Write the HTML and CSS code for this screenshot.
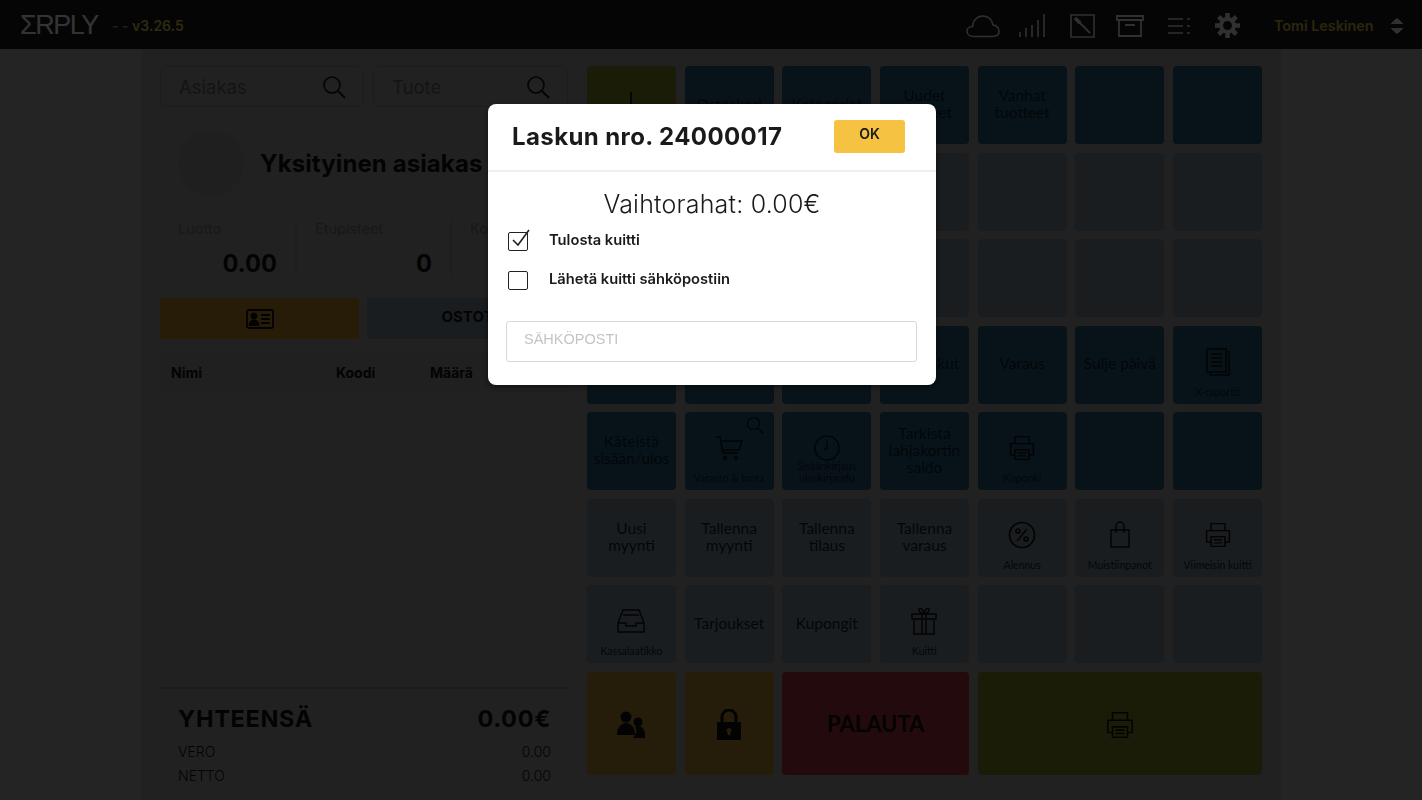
FILE: index.html
```html
<!DOCTYPE html>
<html lang="fi">
<head>
    <meta charset="UTF-8">
    <meta name="viewport" content="width=device-width, initial-scale=1.0">
    <title>Kassa</title>
    <link rel="stylesheet" href="styles.css">
</head>
<body>
    <svg class="defs" width="0" height="0">
        <symbol id="i-print" viewBox="0 0 32 32" fill="none" stroke="currentColor" stroke-width="1.7">
            <path d="M8 11V3h16v8M8 24H3V11h26v13h-5"/>
            <path d="M8 18h16v11H8zM11 21.500h10M11 25h10"/>
        </symbol>
        <symbol id="i-search" viewBox="0 0 24 24" fill="none" stroke="currentColor" stroke-width="1.6">
            <circle cx="10" cy="10" r="8"/>
            <path d="M16 16l7 7" stroke-width="2"/>
        </symbol>
    </svg>

    <header class="topbar">
        <div class="logo">ΣRPLY</div>
        <div class="version"><span class="version-dash">- -</span> v3.26.5</div>
        <div class="top-icons">
            <span class="top-icon">
                <svg width="34" height="24" viewBox="0 0 36 24" fill="none" stroke="currentColor" stroke-width="1.6"><path d="M8 23C3 23 1 20 1 17.500S3 12.500 7 12.500C7 6 12 1.500 18 1.500S28 6 28.500 11C32 11 35 14 35 17.500S32 23 28 23z"/></svg>
            </span>
            <span class="top-icon">
                <svg width="26" height="24" viewBox="0 0 26 24" fill="none" stroke="currentColor" stroke-width="1.6"><path d="M1 23v-5M7 23v-9M13 23V11M19 23V6M25 23V0"/></svg>
            </span>
            <span class="top-icon box-icon">
                <svg width="25" height="24" viewBox="0 0 25 24" fill="none" stroke="currentColor" stroke-width="1.6"><path d="M1 1h23v22H1z"/><path d="M5 4l5 5" stroke-width="3.500"/><path d="M9 8l11 11" stroke-width="1.800"/></svg>
            </span>
            <span class="top-icon">
                <svg width="28" height="22" viewBox="0 0 28 22" fill="none" stroke="currentColor" stroke-width="1.800"><path d="M1 1h26v4H1zM3 5v16h22V5M9 10h10"/></svg>
            </span>
            <span class="top-icon">
                <svg width="22" height="18" viewBox="0 0 22 18" fill="none" stroke="currentColor" stroke-width="1.500"><path d="M0 2h15M0 9h15M0 16h15M19 2h3M19 9h3M19 16h3"/></svg>
            </span>
            <span class="top-icon">
                <svg width="27" height="27" viewBox="0 0 27 27" fill="none" stroke="currentColor"><circle cx="13.500" cy="13.500" r="6.500" stroke-width="4"/><path d="M13.500 1v5M13.500 21v5M1 13.500h5M21 13.500h5M4.700 4.700l3.500 3.500M18.800 18.800l3.500 3.500M4.700 22.300l3.500-3.500M18.800 8.200l3.500-3.500" stroke-width="4.500"/></svg>
            </span>
        </div>
        <div class="user-name">Tomi Leskinen</div>
        <div class="user-arrows"></div>
    </header>

    <main class="wrap">
        <section class="left">
            <div class="search-row">
                <div class="search-box search-customer"><span>Asiakas</span><svg class="search-icon" width="24" height="24"><use href="#i-search"/></svg></div>
                <div class="search-box search-product"><span>Tuote</span><svg class="search-icon" width="24" height="24"><use href="#i-search"/></svg></div>
            </div>

            <div class="customer">
                <div class="avatar"></div>
                <div class="customer-name">Yksityinen asiakas</div>
            </div>

            <div class="stats">
                <div class="stat"><div class="stat-label">Luotto</div><div class="stat-value">0.00</div></div>
                <div class="stat"><div class="stat-label">Etupisteet</div><div class="stat-value">0</div></div>
                <div class="stat"><div class="stat-label">Kortti</div></div>
            </div>

            <div class="tab-row">
                <div class="tab tab-yellow">
                    <svg width="28" height="20" viewBox="0 0 28 20" fill="none" stroke="currentColor" stroke-width="1.800"><rect x="1" y="1" width="26" height="18" rx="2"/><circle cx="8" cy="7" r="2.500" fill="currentColor"/><path d="M3.500 16c0-6 9-6 9 0z" fill="currentColor"/><path d="M15 6h9M15 10h9M15 14h9"/></svg>
                </div>
                <div class="tab tab-blue">OSTOT</div>
            </div>

            <div class="table-head">
                <span class="col-name">Nimi</span>
                <span class="col-code">Koodi</span>
                <span>Määrä</span>
            </div>

            <div class="totals">
                <div class="total-main"><span>YHTEENSÄ</span><span>0.00€</span></div>
                <div class="total-sub"><span>VERO</span><span>0.00</span></div>
                <div class="total-sub"><span>NETTO</span><span>0.00</span></div>
            </div>
        </section>

        <section class="tiles">
            <div class="tile olive"><svg width="4" height="24"><path d="M2 0v24" stroke="currentColor" stroke-width="2"/></svg></div>
            <div class="tile blue">Ostoskori</div>
            <div class="tile blue">Kategoriat</div>
            <div class="tile blue">Uudet tuotteet</div>
            <div class="tile blue">Vanhat tuotteet</div>
            <div class="tile blue"></div>
            <div class="tile blue"></div>

            <div class="tile blue"></div>
            <div class="tile blue"></div>
            <div class="tile blue"></div>
            <div class="tile pale"></div>
            <div class="tile pale"></div>
            <div class="tile pale"></div>
            <div class="tile pale"></div>

            <div class="tile blue"></div>
            <div class="tile blue"></div>
            <div class="tile blue"></div>
            <div class="tile pale"></div>
            <div class="tile pale"></div>
            <div class="tile pale"></div>
            <div class="tile pale"></div>

            <div class="tile blue"></div>
            <div class="tile blue"></div>
            <div class="tile blue"></div>
            <div class="tile blue">Ota laskut</div>
            <div class="tile blue">Varaus</div>
            <div class="tile blue">Sulje päivä</div>
            <div class="tile blue icon-tile">
                <svg width="26" height="28" viewBox="0 0 26 28" fill="none" stroke="currentColor" stroke-width="1.500"><path d="M2 1h19v23H2zM21 4h3v23H5v-3M6 6h11M6 10h11M6 14h11M6 18h11"/></svg>
                <span class="tile-label">X-raportti</span>
            </div>

            <div class="tile blue">Käteistä sisään/ulos</div>
            <div class="tile blue icon-tile">
                <svg class="corner-search" width="18" height="18"><use href="#i-search"/></svg>
                <svg width="28" height="28" viewBox="0 0 28 28" fill="none" stroke="currentColor" stroke-width="1.600"><path d="M1 3h4l3 16h15M6 7h21l-3 9H8"/><circle cx="10" cy="24" r="1.500"/><circle cx="21" cy="24" r="1.500"/></svg>
                <span class="tile-label">Varasto &amp; hinta</span>
            </div>
            <div class="tile blue icon-tile">
                <svg width="28" height="28" viewBox="0 0 28 28" fill="none" stroke="currentColor" stroke-width="1.500"><circle cx="14" cy="14" r="12"/><path d="M14 7v8h-3"/></svg>
                <span class="tile-label tight">Sisäänkirjaus uloskirjaudu</span>
            </div>
            <div class="tile blue">Tarkista lahjakortin saldo</div>
            <div class="tile blue icon-tile">
                <svg width="28" height="28"><use href="#i-print"/></svg>
                <span class="tile-label">Kuponki</span>
            </div>
            <div class="tile blue"></div>
            <div class="tile blue"></div>

            <div class="tile pale">Uusi myynti</div>
            <div class="tile pale">Tallenna myynti</div>
            <div class="tile pale">Tallenna tilaus</div>
            <div class="tile pale">Tallenna varaus</div>
            <div class="tile pale icon-tile">
                <svg width="28" height="28" viewBox="0 0 28 28" fill="none" stroke="currentColor" stroke-width="1.700"><circle cx="14" cy="14" r="12.500"/><circle cx="10" cy="10" r="2"/><circle cx="18" cy="18" r="2"/><path d="M19 8L9 20"/></svg>
                <span class="tile-label">Alennus</span>
            </div>
            <div class="tile pale icon-tile">
                <svg width="28" height="28" viewBox="0 0 28 28" fill="none" stroke="currentColor" stroke-width="1.500"><path d="M5 9h18v17H5zM10 12V5a4 4 0 0 1 8 0v7"/></svg>
                <span class="tile-label">Muistiinpanot</span>
            </div>
            <div class="tile pale icon-tile">
                <svg width="28" height="28"><use href="#i-print"/></svg>
                <span class="tile-label">Viimeisin kuitti</span>
            </div>

            <div class="tile pale icon-tile">
                <svg width="28" height="28" viewBox="0 0 28 28" fill="none" stroke="currentColor" stroke-width="1.500"><path d="M6 3h16l5 13v9H1v-9zM1 16h8v3h10v-3h8M6 8h16"/></svg>
                <span class="tile-label">Kassalaatikko</span>
            </div>
            <div class="tile pale">Tarjoukset</div>
            <div class="tile pale">Kupongit</div>
            <div class="tile pale icon-tile">
                <svg width="28" height="28" viewBox="0 0 28 28" fill="none" stroke="currentColor" stroke-width="1.500"><path d="M2 7h24v5H2zM4 12h20v15H4zM12 7v20M16 7v20M14 7C10 6 8 4 9 2s5 1 5 5c0-4 4-7 5-5s-1 4-5 5z"/></svg>
                <span class="tile-label">Kuitti</span>
            </div>
            <div class="tile pale"></div>
            <div class="tile pale"></div>
            <div class="tile pale"></div>

            <div class="tile yellow low">
                <svg width="30" height="28" viewBox="0 0 30 28" fill="currentColor"><circle cx="10" cy="6" r="5.500"/><path d="M1 24c0-16 18-16 18 0z"/><circle cx="22" cy="11" r="4.500"/><path d="M17 27c4-5 4-9 2-11 5-3 11 1 10 11z"/></svg>
            </div>
            <div class="tile yellow low">
                <svg width="26" height="32" viewBox="0 0 26 32"><path fill="currentColor" fill-rule="evenodd" d="M1 13h24v18H1zM13 19a2.500 2.500 0 0 0-1.500 4.500V26h3v-2.500A2.500 2.500 0 0 0 13 19z"/><path d="M6 13V8a7 7 0 0 1 14 0v5" fill="none" stroke="currentColor" stroke-width="3"/></svg>
            </div>
            <div class="tile red wide-2">PALAUTA</div>
            <div class="tile olive wide-3 low">
                <svg width="30" height="30"><use href="#i-print"/></svg>
            </div>
        </section>
    </main>

    <div class="overlay">
        <div class="modal">
            <div class="modal-head">
                <h2>Laskun nro. 24000017</h2>
                <button class="ok-btn">OK</button>
            </div>
            <div class="modal-body">
                <div class="change">Vaihtorahat: 0.00€</div>
                <div class="check-row">
                    <span class="check-box">
                        <svg class="check-mark" width="22" height="22" viewBox="0 0 22 22" fill="none" stroke="#222" stroke-width="1.600"><path d="M4 12l5 5L20 2"/></svg>
                    </span>
                    <span class="check-label">Tulosta kuitti</span>
                </div>
                <div class="check-row">
                    <span class="check-box"></span>
                    <span class="check-label">Lähetä kuitti sähköpostiin</span>
                </div>
                <input class="email" type="text" placeholder="SÄHKÖPOSTI">
            </div>
        </div>
    </div>
</body>
</html>
```

FILE: styles.css
```css
* {
    box-sizing: border-box;
}
body {
    margin: 0;
    height: 800px;
    overflow: hidden;
    font-family: "Inter", "Liberation Sans", sans-serif;
    background-color: #b4b4b4;
    color: #111;
}
.defs {
    position: absolute;
}

/* top bar */
.topbar {
    height: 49px;
    background-color: #191919;
    display: flex;
    align-items: center;
    padding: 2px 18px 0 20px;
    color: #eee;
}
.logo {
    font-family: "Liberation Sans", sans-serif;
    font-size: 27px;
    font-weight: 400;
    letter-spacing: -1.5px;
    width: 92px;
    color: #fff;
}
.version {
    font-size: 14px;
    font-weight: 600;
    color: #e6cc55;
}
.version-dash {
    color: #999;
}
.top-icons {
    display: flex;
    margin-left: auto;
}
.top-icon {
    width: 49px;
    display: flex;
    justify-content: center;
    align-items: center;
}
.box-icon {
    padding-left: 3px;
}
.user-name {
    margin-left: 22px;
    font-size: 14.300px;
    font-weight: 600;
    color: #d8bc48;
    width: 116px;
    white-space: nowrap;
}
.user-arrows {
    width: 14px;
    height: 16px;
    background:
        linear-gradient(to bottom right, transparent 50%, #eee 51%) left 0 / 7px 6px no-repeat,
        linear-gradient(to bottom left, transparent 50%, #eee 51%) right 0 / 7px 6px no-repeat,
        linear-gradient(to top right, transparent 50%, #eee 51%) left 100% / 7px 6px no-repeat,
        linear-gradient(to top left, transparent 50%, #eee 51%) right 100% / 7px 6px no-repeat;
}

/* page */
.wrap {
    width: 1140px;
    height: 751px;
    margin: 0 auto;
    padding: 17px 18px 0 19px;
    background-color: #a5a5a5;
    display: flex;
    gap: 19px;
}
.left {
    width: 408px;
    height: 725px;
    display: flex;
    flex-direction: column;
}
.search-row {
    display: flex;
    gap: 9px;
}
.search-box {
    height: 41px;
    border: 1px solid #8e8e8e;
    border-radius: 6px;
    padding: 0 17px 0 18px;
    display: flex;
    align-items: center;
    justify-content: space-between;
    font-size: 18.500px;
    color: #666;
}
.search-customer {
    width: 204px;
}
.search-product {
    width: 195px;
}
.search-icon {
    color: #111;
}
.customer {
    display: flex;
    align-items: center;
    margin: 24px 0 0 18px;
    gap: 16px;
    height: 64px;
}
.avatar {
    width: 66px;
    height: 66px;
    border-radius: 50%;
    background-color: #9b9b9b;
}
.customer-name {
    font-size: 24px;
    font-weight: 700;
    letter-spacing: 0.1px;
    white-space: nowrap;
}
.stats {
    display: flex;
    margin-top: 25px;
    height: 56px;
}
.stat {
    width: 137px;
    height: 56px;
    margin-right: 18px;
    padding-right: 18px;
    border-right: 2px solid #959595;
    flex: none;
}
.stat:first-child {
    padding-left: 18px;
}
.stat:last-child {
    border-right: none;
}
.stat-label {
    font-size: 14.500px;
    line-height: 17px;
    color: #777;
}
.stat-value {
    font-size: 23.700px;
    line-height: 28px;
    font-weight: 700;
    text-align: right;
    margin-top: 13px;
}
.tab-row {
    display: flex;
    justify-content: space-between;
    margin-top: 22px;
}
.tab {
    height: 41px;
    display: flex;
    align-items: center;
    justify-content: center;
    font-size: 15px;
    font-weight: 700;
}
.tab-yellow {
    width: 199px;
    background-color: #c08c28;
}
.tab-blue {
    width: 201px;
    background-color: #7d91a0;
    padding-bottom: 5px;
}
.table-head {
    height: 40px;
    margin-top: 13px;
    padding-left: 11px;
    background-color: #9e9e9e;
    display: flex;
    align-items: center;
    font-size: 14px;
    font-weight: 700;
}
.col-name {
    width: 165px;
}
.col-code {
    width: 94px;
}
.totals {
    margin-top: auto;
    border-top: 2px solid #8c8c8c;
    padding: 15px 17px 3px 18px;
}
.total-main {
    display: flex;
    justify-content: space-between;
    font-size: 23.500px;
    line-height: 30px;
    letter-spacing: 0.7px;
    font-weight: 700;
    margin-bottom: 6px;
}
.total-sub {
    display: flex;
    justify-content: space-between;
    font-size: 14px;
    font-weight: 300;
    line-height: 24px;
}

/* tile grid */
.tiles {
    width: 675px;
    display: grid;
    grid-template-columns: repeat(7, 1fr);
    grid-template-rows: repeat(7, 78px) 103px;
    gap: 8.500px 8.700px;
}
.tile {
    position: relative;
    border-radius: 4px;
    display: flex;
    flex-direction: column;
    align-items: center;
    justify-content: center;
    text-align: center;
    padding: 0 5px 2px;
    font-family: "Lato", sans-serif;
    font-size: 15.500px;
    line-height: 17px;
    color: #10222c;
}
.blue {
    background-color: #285f7d;
}
.pale {
    background-color: #7d91a0;
}
.olive {
    background-color: #878c28;
}
.yellow {
    background-color: #be8c32;
}
.red {
    background-color: #af323c;
    font-size: 22px;
    font-weight: 700;
    color: #111;
    padding-bottom: 0;
}
.wide-2 {
    grid-column: span 2;
}
.wide-3 {
    grid-column: span 3;
}
.low {
    padding-top: 6px;
    color: #111;
}
.icon-tile {
    justify-content: flex-start;
    padding-top: 22px;
    color: #111;
}
.tile-label {
    position: absolute;
    bottom: 6px;
    left: 0;
    right: 0;
    font-size: 10.500px;
    line-height: 12px;
    color: #10222c;
}
.tile-label.tight {
    padding: 0 8px;
}
.corner-search {
    position: absolute;
    top: 4px;
    right: 10px;
}

/* modal */
.overlay {
    position: fixed;
    top: 0;
    left: 0;
    right: 0;
    bottom: 0;
    background-color: rgba(0, 0, 0, 0.8);
}
.modal {
    width: 448px;
    height: 281px;
    margin: 104px 0 0 488px;
    background-color: #fff;
    border-radius: 8px;
    box-shadow: 0 2px 6px rgba(0, 0, 0, 0.5);
    color: #1a1a1a;
}
.modal-head {
    height: 68px;
    padding: 0 31px 2px 24px;
    border-bottom: 2px solid #f0f0f0;
    display: flex;
    align-items: center;
    justify-content: space-between;
}
.modal-head h2 {
    margin: 0;
    font-size: 24px;
    font-weight: 700;
    letter-spacing: 0.4px;
}
.ok-btn {
    width: 71px;
    height: 33px;
    border: none;
    border-radius: 3px;
    background-color: #f5c242;
    font-family: "Inter", sans-serif;
    font-size: 14px;
    font-weight: 600;
    color: #1a1a1a;
    padding-bottom: 6px;
}
.modal-body {
    padding: 18px 18px 0 18px;
}
.change {
    text-align: center;
    font-size: 25px;
    font-weight: 300;
    letter-spacing: 0.2px;
    line-height: 28px;
    margin-bottom: 13px;
}
.check-row {
    display: flex;
    align-items: center;
    height: 20px;
    margin: 0 0 19px 2px;
    gap: 21px;
}
.check-box {
    position: relative;
    width: 20px;
    height: 19px;
    border: 1.500px solid #222;
    border-radius: 2px;
    flex: none;
}
.check-mark {
    position: absolute;
    top: -5px;
    left: 0;
}
.check-label {
    font-size: 14.700px;
    font-weight: 600;
    white-space: nowrap;
    margin-top: -3px;
}
.email {
    display: block;
    width: 411px;
    height: 41px;
    margin-top: 31px;
    border: 1px solid #d8d8d8;
    border-radius: 3px;
    padding: 0 17px 6px;
    font-family: "Liberation Sans", sans-serif;
    font-size: 14.500px;
}
.email::placeholder {
    color: #c4c4c4;
}
```
